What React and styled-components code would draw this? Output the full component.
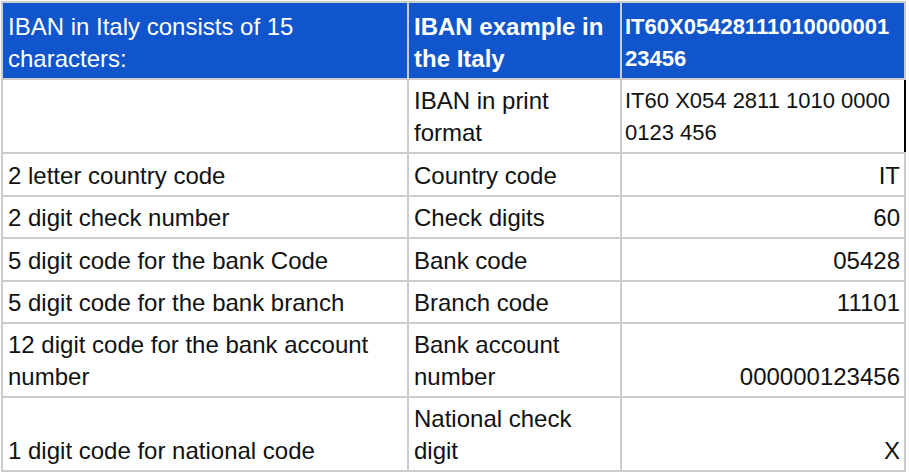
import React from "react";
import styled, { createGlobalStyle } from "styled-components";

const Global = createGlobalStyle`
  html, body { margin: 0; padding: 0; background: #ffffff; }
  body { font-family: "Liberation Sans", Arial, sans-serif; }
`;

const Wrap = styled.div`
  padding: 1px 0 0 1px;
`;

const Table = styled.table`
  border-collapse: collapse;
  table-layout: fixed;
  width: 903px;
  font-family: "Liberation Sans", Arial, sans-serif;
  font-size: 24px;
  line-height: 32px;
  color: #111111;
`;

const Cell = styled.td`
  border: 2px solid #cccccc;
  padding: ${(p) => p.$top ?? 5}px 4px 3px ${(p) => (p.$small ? "3px" : "5px")};
  vertical-align: bottom;
  text-align: ${(p) => (p.$right ? "right" : "left")};
  font-size: ${(p) => (p.$small ? "22px" : "24px")};
  overflow-wrap: break-word;
`;

const HeadCell = styled.th`
  border: 2px solid #cccccc;
  background: #1155cc;
  color: #ffffff;
  padding: 8px 4px 3px ${(p) => (p.$small ? "3px" : "5px")};
  vertical-align: bottom;
  text-align: left;
  font-weight: ${(p) => (p.$bold ? 700 : 400)};
  font-size: ${(p) => (p.$small ? "22px" : "24px")};
  word-break: ${(p) => (p.$breakAll ? "break-all" : "normal")};
`;

const PrintCell = styled(Cell)`
  border-right: 2px solid #000000;
`;

const rows = [
  ["2 letter country code", "Country code", "IT", 6],
  ["2 digit check number", "Check digits", "60", 5],
  ["5 digit code for the bank Code", "Bank code", "05428", 6],
  ["5 digit code for the bank branch", "Branch code", "11101", 5],
  ["12 digit code for the bank account number", "Bank account number", "000000123456", 5],
  ["1 digit code for national code", "National check digit", "X", 5],
];

export default function App() {
  return (
    <Wrap>
      <Global />
      <Table>
        <colgroup>
          <col style={{ width: "406px" }} />
          <col style={{ width: "213px" }} />
          <col style={{ width: "284px" }} />
        </colgroup>
        <thead>
          <tr>
            <HeadCell>IBAN in Italy consists of 15 characters:</HeadCell>
            <HeadCell $bold>IBAN example in the Italy</HeadCell>
            <HeadCell $bold $small $breakAll>IT60X0542811101000000123456</HeadCell>
          </tr>
        </thead>
        <tbody>
          <tr>
            <Cell />
            <Cell>IBAN in print format</Cell>
            <PrintCell $small>IT60 X054 2811 1010 0000 0123 456</PrintCell>
          </tr>
          {rows.map(([a, b, c, top]) => (
            <tr key={a}>
              <Cell $top={top}>{a}</Cell>
              <Cell $top={top}>{b}</Cell>
              <Cell $top={top} $right>{c}</Cell>
            </tr>
          ))}
        </tbody>
      </Table>
    </Wrap>
  );
}
